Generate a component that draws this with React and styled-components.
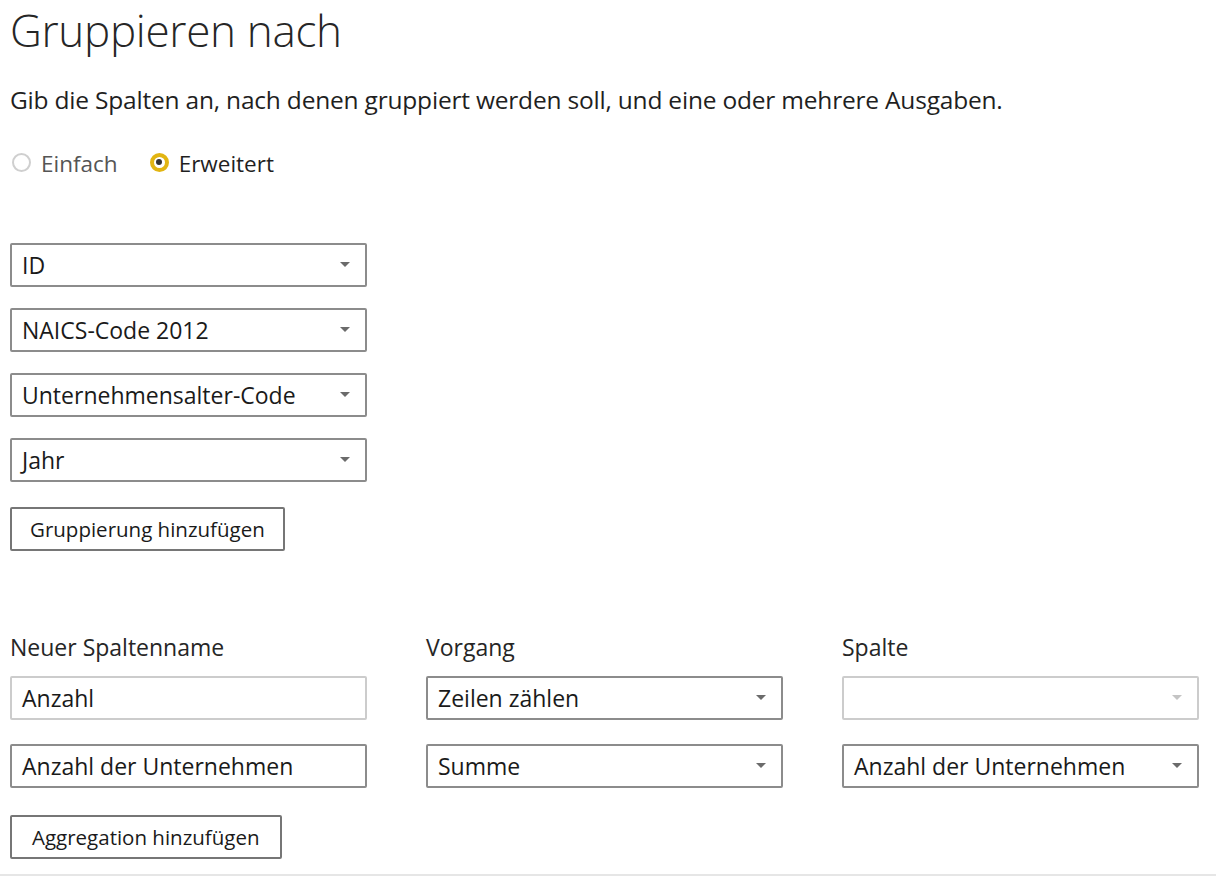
import styled, {createGlobalStyle} from "styled-components";

const GlobalStyle = createGlobalStyle`
  body {
    margin: 0;
    background: #ffffff;
    font-family: "Open Sans", "Noto Sans", sans-serif;
    color: #1f1f1f;
  }
`;

const Page = styled.div`
  width: 1216px;
  height: 876px;
  box-sizing: border-box;
  padding: 0 0 0 10px;
  position: relative;
  overflow: hidden;
  border-bottom: 2px solid #e6e6e6;
`;

const Title = styled.h1`
  margin: 0;
  font-size: 44px;
  font-weight: 300;
  line-height: 60px;
  letter-spacing: -0.3px;
  color: #262626;
`;

const Subtitle = styled.p`
  margin: 25px 0 0;
  font-size: 24.5px;
  line-height: 30px;
  letter-spacing: -0.2px;
  color: #1f1f1f;
`;

const RadioRow = styled.div`
  display: flex;
  align-items: center;
  gap: 32px;
  margin-top: 34px;
  padding-left: 2px;
`;

const RadioOption = styled.label`
  display: flex;
  align-items: center;
  gap: 10px;
  font-size: 22.5px;
  line-height: 30px;
  color: ${props => props.checked ? "#1f1f1f" : "#555555"};
`;

const RadioCircle = styled.span`
  width: 19px;
  height: 19px;
  box-sizing: border-box;
  border-radius: 50%;
  border: ${props => props.checked ? "4px solid #e2b512" : "2px solid #cfcfcf"};
  display: flex;
  align-items: center;
  justify-content: center;
  margin-top: -4px;
  &::after {
    content: "";
    display: ${props => props.checked ? "block" : "none"};
    width: 6px;
    height: 6px;
    border-radius: 50%;
    background: #333333;
  }
`;

const GroupList = styled.div`
  display: flex;
  flex-direction: column;
  gap: 21px;
  margin-top: 64px;
`;

const Field = styled.div`
  width: 357px;
  height: 44px;
  box-sizing: border-box;
  border: 2px solid ${props => props.light ? "#cccccc" : "#8c8c8c"};
  border-radius: 2px;
  display: flex;
  align-items: center;
  justify-content: space-between;
  padding: 0 15px 0 10px;
  font-size: 23px;
  color: #1a1a1a;
  background: #ffffff;
`;

const Arrow = styled.span`
  width: 0;
  height: 0;
  border-left: 5px solid transparent;
  border-right: 5px solid transparent;
  border-top: 5px solid ${props => props.light ? "#c4c4c4" : "#6b6b6b"};
  margin-bottom: 2px;
`;

const Button = styled.button`
  height: 44px;
  box-sizing: border-box;
  border: 2px solid #767676;
  border-radius: 2px;
  background: #ffffff;
  padding: 0 18px;
  font-family: inherit;
  font-size: 20.5px;
  color: #1a1a1a;
  align-self: flex-start;
`;

const GroupButton = styled(Button)`
  margin-top: 4px;
`;

const AggGrid = styled.div`
  display: grid;
  grid-template-columns: 357px 357px 357px;
  column-gap: 59px;
  row-gap: 24px;
  margin-top: 81px;
`;

const ColLabel = styled.div`
  font-size: 23px;
  line-height: 30px;
  color: #262626;
  margin-bottom: -10px;
`;

const AggButton = styled(Button)`
  grid-column: 1;
  justify-self: start;
  margin-top: 3px;
  padding: 0 20px;
`;

const Dropdown = ({value, light}) => (
  <Field light={light}>
    <span>{value}</span>
    <Arrow light={light}/>
  </Field>
);

const groups = ["ID", "NAICS-Code 2012", "Unternehmensalter-Code", "Jahr"];

const App = () => {
  return (
    <>
      <GlobalStyle/>
      <Page>
        <Title>Gruppieren nach</Title>
        <Subtitle>Gib die Spalten an, nach denen gruppiert werden soll, und eine oder mehrere Ausgaben.</Subtitle>
        <RadioRow>
          <RadioOption><RadioCircle/>Einfach</RadioOption>
          <RadioOption checked><RadioCircle checked/>Erweitert</RadioOption>
        </RadioRow>
        <GroupList>
          {groups.map(g => <Dropdown key={g} value={g}/>)}
          <GroupButton>Gruppierung hinzufügen</GroupButton>
        </GroupList>
        <AggGrid>
          <ColLabel>Neuer Spaltenname</ColLabel>
          <ColLabel>Vorgang</ColLabel>
          <ColLabel>Spalte</ColLabel>
          <Field light><span>Anzahl</span></Field>
          <Dropdown value="Zeilen zählen"/>
          <Dropdown value="" light/>
          <Field><span>Anzahl der Unternehmen</span></Field>
          <Dropdown value="Summe"/>
          <Dropdown value="Anzahl der Unternehmen"/>
          <AggButton>Aggregation hinzufügen</AggButton>
        </AggGrid>
      </Page>
    </>
  );
};

export default App;
